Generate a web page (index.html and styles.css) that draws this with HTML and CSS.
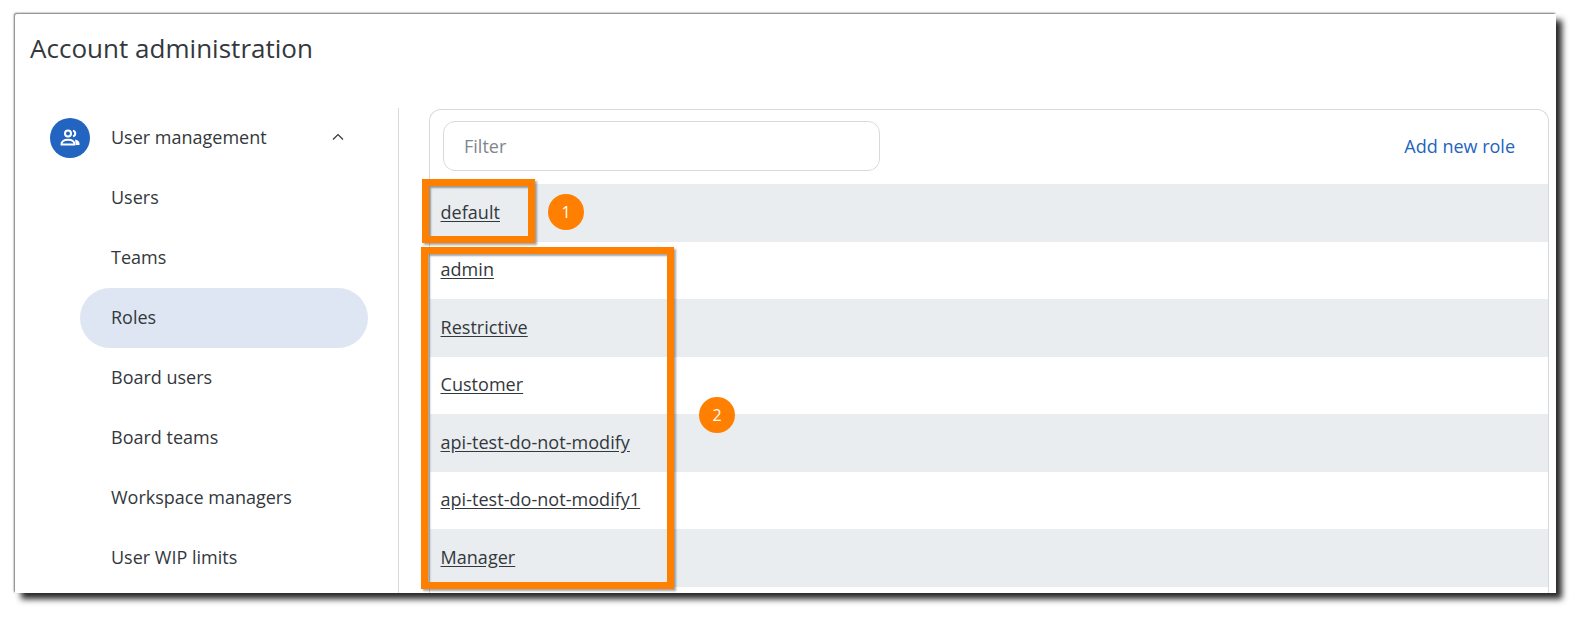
FILE: index.html
```html
<!DOCTYPE html>
<html lang="en">
<head>
<meta charset="utf-8">
<title>Account administration</title>
<link rel="stylesheet" href="styles.css">
</head>
<body>
<div class="window">
  <h1 class="title">Account administration</h1>
  <div class="content">
    <nav class="sidebar">
      <div class="nav-head">
        <span class="nav-icon">
          <svg viewBox="0 0 24 24" width="24" height="24" fill="none" stroke="#fff" stroke-width="2">
            <circle cx="10" cy="7.500" r="3"/>
            <path d="M15 4.600a3 3 0 0 1 0 5.800"/>
            <path d="M3.500 18.500c-.500-3 2.600-4.800 6.500-4.800s7 1.800 6.500 4.800z"/>
            <path d="M17 13.500c2.300.400 4.500 1.500 4.500 4v1.500h-3.700z" fill="#fff" stroke="none"/>
          </svg>
        </span>
        <span class="nav-head-label">User management</span>
        <svg class="chevron" viewBox="0 0 12 8" width="12" height="8" fill="none" stroke="#33383d" stroke-width="1.200"><path d="M1 6.500l5-5 5 5"/></svg>
      </div>
      <a class="nav-item">Users</a>
      <a class="nav-item">Teams</a>
      <a class="nav-item active">Roles</a>
      <a class="nav-item">Board users</a>
      <a class="nav-item">Board teams</a>
      <a class="nav-item">Workspace managers</a>
      <a class="nav-item">User WIP limits</a>
    </nav>
    <section class="panel">
      <div class="toolbar">
        <div class="filter">Filter</div>
        <a class="add-role">Add new role</a>
      </div>
      <div class="row alt"><a class="role">default</a></div>
      <div class="row"><a class="role">admin</a></div>
      <div class="row alt"><a class="role">Restrictive</a></div>
      <div class="row"><a class="role">Customer</a></div>
      <div class="row alt"><a class="role">api-test-do-not-modify</a></div>
      <div class="row"><a class="role">api-test-do-not-modify1</a></div>
      <div class="row alt"><a class="role">Manager</a></div>
    </section>
  </div>
</div>
<div class="mark mark-one"></div>
<div class="mark mark-two"></div>
<div class="badge badge-one">1</div>
<div class="badge badge-two">2</div>
</body>
</html>
```
FILE: styles.css
```css
* { box-sizing: border-box; }
html, body { margin: 0; height: 100%; background: #fff; overflow: hidden; }
body {
  position: relative;
  font-family: "Open Sans", "Noto Sans", sans-serif;
  color: #33383d;
  padding: 14px 0 0 15px;
}
.window {
  width: 1541px;
  height: 579px;
  background: #fff;
  overflow: hidden;
  display: flex;
  flex-direction: column;
  border-top-left-radius: 2px;
  box-shadow: 6px 6px 6px rgba(0,0,0,.85), -1px -1px 2px rgba(0,0,0,.55);
}
.title {
  margin: 0;
  padding: 16px 0 0 15px;
  height: 94px;
  font-size: 26px;
  line-height: 36px;
  font-weight: 400;
  letter-spacing: .02px;
}
.content { display: flex; flex: 1; min-height: 0; }
.sidebar {
  width: 384px;
  flex: none;
  border-right: 1px solid #d3dbe0;
  display: flex;
  flex-direction: column;
}
.nav-head {
  height: 59px;
  flex: none;
  display: flex;
  align-items: center;
  padding-left: 35px;
  padding-bottom: 0;
  font-size: 18px;
}
.nav-icon {
  width: 40px;
  height: 40px;
  border-radius: 50%;
  background: #2264c0;
  display: flex;
  align-items: center;
  justify-content: center;
  flex: none;
}
.nav-head-label { margin-left: 21px; width: 221px; position: relative; top: -1px; }
.chevron { position: relative; top: -1px; }
.nav-item {
  height: 60px;
  flex: none;
  margin-left: 65px;
  width: 288px;
  border-radius: 30px;
  padding-left: 31px;
  padding-bottom: 1px;
  display: flex;
  align-items: center;
  font-size: 18px;
}
.nav-item.active { background: #dde6f2; margin-top: 1px; margin-bottom: -1px; padding-bottom: 2px; }
.panel {
  flex: none;
  width: 1120px;
  margin: 1px 0 0 30px;
  border: 1px solid #d3dbe0;
  border-radius: 12px 12px 0 0;
  border-bottom: 0;
}
.toolbar {
  height: 74px;
  display: flex;
  align-items: center;
  justify-content: space-between;
  padding: 0 33px 2px 13px;
}
.filter {
  width: 437px;
  height: 50px;
  border: 1px solid #d3dbe0;
  border-radius: 12px;
  padding-left: 20px;
  display: flex;
  align-items: center;
  font-size: 18px;
  color: #80868b;
}
.add-role { color: #2264c0; font-size: 18px; font-weight: 500; }
.row {
  height: 57.500px;
  display: flex;
  align-items: center;
  padding-left: 10.500px;
  padding-bottom: 2px;
  font-size: 18px;
}
.row.alt { background: #e9edf0; }
.role { text-decoration: underline; text-underline-offset: 2px; letter-spacing: .04px; }
.mark {
  position: absolute;
  border: 7px solid #ff8000;
  box-shadow: 2px 2px 2px rgba(0,0,0,.35), inset 2px 2px 2px rgba(0,0,0,.35);
}
.mark-one { left: 422px; top: 179px; width: 113px; height: 64px; }
.mark-two { left: 421px; top: 247px; width: 253px; height: 342px; }
.badge {
  position: absolute;
  width: 36px;
  height: 36px;
  border-radius: 50%;
  background: #ff8000;
  color: #fff;
  display: flex;
  align-items: center;
  justify-content: center;
  font-size: 16px;
}
.badge-one { left: 548px; top: 194px; }
.badge-two { left: 699px; top: 397px; }
```
